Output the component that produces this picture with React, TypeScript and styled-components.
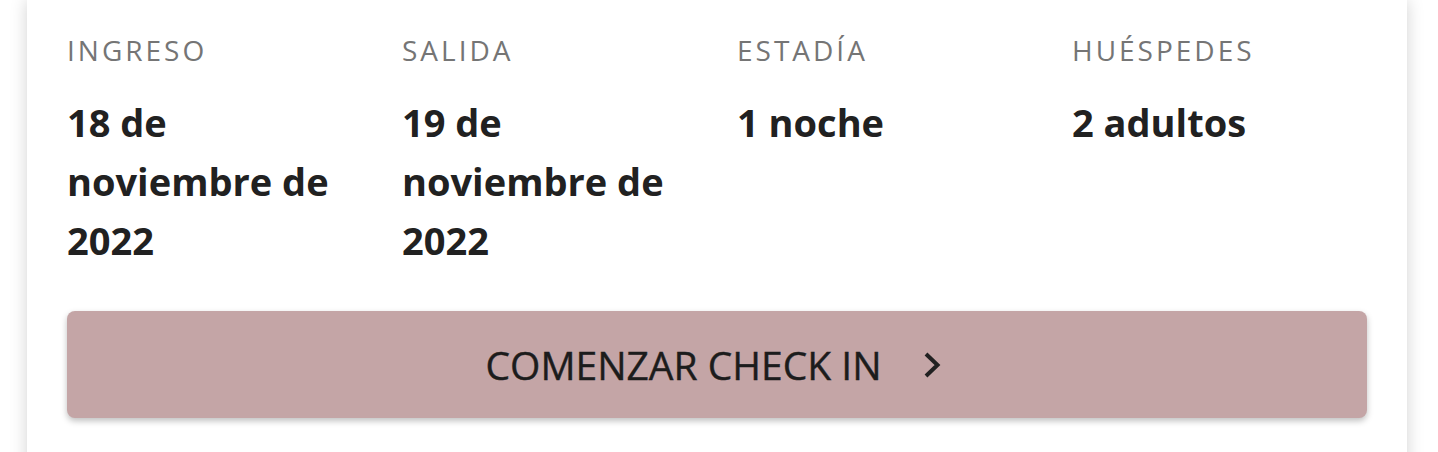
import React from 'react';
import styled, { createGlobalStyle } from 'styled-components';

interface Detail {
    label: string;
    value: string;
}

const details: Detail[] = [
    { label: 'Ingreso', value: '18 de noviembre de 2022' },
    { label: 'Salida', value: '19 de noviembre de 2022' },
    { label: 'Estadía', value: '1 noche' },
    { label: 'Huéspedes', value: '2 adultos' },
];

const GlobalStyle = createGlobalStyle`
    body {
        margin: 0;
        background: #ffffff;
        font-family: 'Open Sans', 'Noto Sans', sans-serif;
        color: #212121;
        overflow: hidden;
    }
`;

const Card = styled.section`
    margin: 0 31px 0 27px;
    min-height: 480px;
    background: #ffffff;
    box-shadow: 0 0 16px rgba(0, 0, 0, 0.18);
    padding: 32px 40px 40px 40px;
    box-sizing: border-box;
`;

const Grid = styled.div`
    display: grid;
    grid-template-columns: repeat(4, 1fr);
    margin-right: -40px;
`;

const Item = styled.div`
    display: flex;
    flex-direction: column;
    gap: 25px;
    padding-right: 42px;
`;

const Label = styled.div`
    font-size: 28px;
    line-height: 36px;
    letter-spacing: 3px;
    text-transform: uppercase;
    color: #757575;
`;

const Value = styled.div`
    font-size: 38px;
    line-height: 59px;
    font-weight: 700;
    color: #212121;
`;

const Button = styled.button`
    margin-top: 41px;
    width: 100%;
    height: 107px;
    border: none;
    border-radius: 8px;
    background: #c4a5a6;
    box-shadow: 0 3px 6px rgba(0, 0, 0, 0.25);
    display: flex;
    align-items: center;
    justify-content: center;
    gap: 41px;
    padding: 0 8px 0 0;
    font-family: 'Open Sans', 'Noto Sans', sans-serif;
    font-size: 39px;
    font-weight: 500;
    color: #1c1c1c;
    -webkit-text-stroke: 0.4px #1c1c1c;
    cursor: pointer;
`;

const Chevron = () => (
    <svg width="18" height="26" viewBox="0 0 18 26" fill="none">
        <path d="M3 2 L14.5 13 L3 24" stroke="#212121" strokeWidth="4" />
    </svg>
);

export default function App() {
    return (
        <React.Fragment>
            <GlobalStyle />
            <Card>
                <Grid>
                    {details.map((d) => (
                        <Item key={d.label}>
                            <Label>{d.label}</Label>
                            <Value>{d.value}</Value>
                        </Item>
                    ))}
                </Grid>
                <Button>
                    COMENZAR CHECK IN
                    <Chevron />
                </Button>
            </Card>
        </React.Fragment>
    );
}
